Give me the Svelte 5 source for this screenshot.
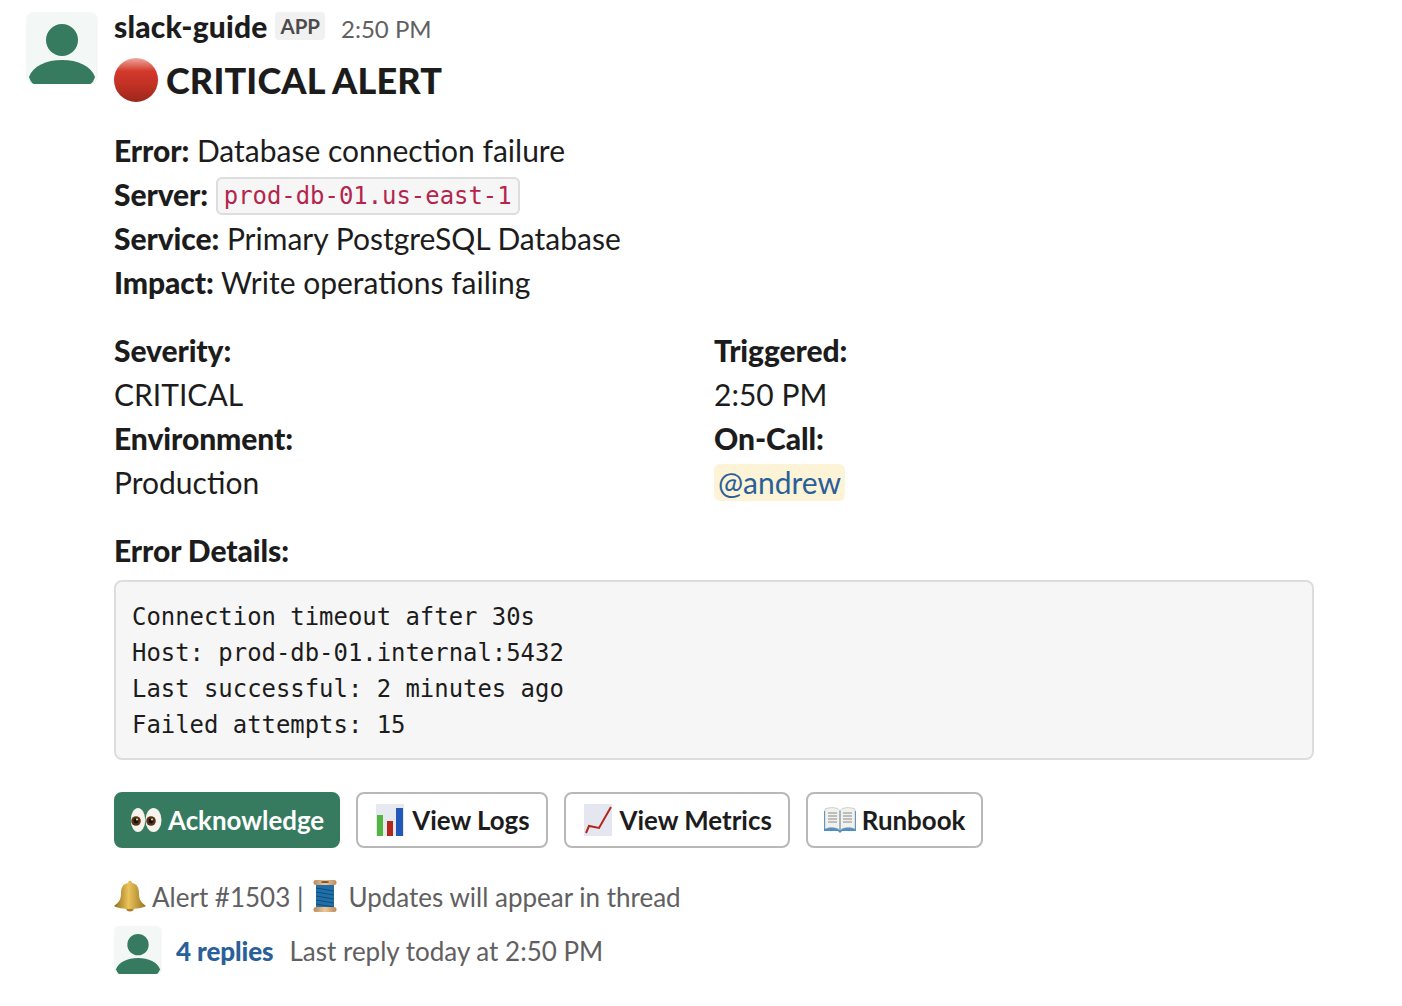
<script>
  const infoRows = [
    { label: 'Error:', value: 'Database connection failure' },
    { label: 'Server:', code: 'prod-db-01.us-east-1' },
    { label: 'Service:', value: 'Primary PostgreSQL Database' },
    { label: 'Impact:', value: 'Write operations failing' }
  ];
  const errorLines = [
    'Connection timeout after 30s',
    'Host: prod-db-01.internal:5432',
    'Last successful: 2 minutes ago',
    'Failed attempts: 15'
  ];
</script>

{#snippet avatar(cls)}
  <svg class={cls} viewBox="0 0 72 72" role="img" aria-label="avatar">
    <rect width="72" height="72" rx="8" fill="#f3f7f6" />
    <circle cx="36" cy="28" r="16" fill="#367b5f" />
    <path d="M3 65C7 54 20 48 36 48C52 48 65 54 69 65C68 68 66 72 64 72H8C6 72 4 68 3 65Z" fill="#367b5f" />
  </svg>
{/snippet}

<main class="message">
  {@render avatar('avatar')}
  <div class="body">
    <header class="meta">
      <span class="name">slack-guide</span>
      <span class="app">APP</span>
      <span class="time">2:50 PM</span>
    </header>

    <h1 class="title">
      <svg class="red-dot" viewBox="0 0 44 44">
        <defs>
          <linearGradient id="dot-fill" x1="0" y1="0" x2="0" y2="1">
            <stop offset="0" stop-color="#f0a79d" />
            <stop offset="0.3" stop-color="#d2392b" />
            <stop offset="0.65" stop-color="#bf3024" />
            <stop offset="1" stop-color="#9c261b" />
          </linearGradient>
        </defs>
        <circle cx="22" cy="22" r="22" fill="url(#dot-fill)" />
      </svg>
      <span>CRITICAL ALERT</span>
    </h1>

    <div class="info">
      {#each infoRows as row}
        <div class="line">
          <b>{row.label}</b>
          {#if row.code}<code>{row.code}</code>{:else}{row.value}{/if}
        </div>
      {/each}
    </div>

    <div class="fields">
      <div class="line"><b>Severity:</b></div>
      <div class="line"><b>Triggered:</b></div>
      <div class="line">CRITICAL</div>
      <div class="line">2:50 PM</div>
      <div class="line"><b>Environment:</b></div>
      <div class="line"><b>On-Call:</b></div>
      <div class="line">Production</div>
      <div class="line"><span class="mention">@andrew</span></div>
    </div>

    <div class="line details"><b>Error Details:</b></div>
    <pre class="block">{errorLines.join('\n')}</pre>

    <div class="actions">
      <button class="btn primary">
        <svg class="emoji" viewBox="0 0 32 32">
          <ellipse cx="8" cy="16" rx="7.200" ry="12" fill="#f6f3ec" />
          <ellipse cx="23.500" cy="16" rx="8" ry="12" fill="#f6f3ec" />
          <circle cx="6" cy="17" r="4.800" fill="#5a3411" />
          <circle cx="21" cy="17" r="4.800" fill="#5a3411" />
          <circle cx="6" cy="17" r="2.400" fill="#111" />
          <circle cx="21" cy="17" r="2.400" fill="#111" />
          <circle cx="7" cy="15.500" r="0.900" fill="#fff" />
          <circle cx="22" cy="15.500" r="0.900" fill="#fff" />
        </svg>
        Acknowledge
      </button>
      <button class="btn">
        <svg class="emoji" viewBox="0 0 32 32">
          <rect x="2" width="28" height="32" fill="#e6e9f0" />
          <rect x="3" y="11" width="6" height="21" fill="#53b63e" />
          <rect x="13" y="17" width="6" height="15" fill="#b3261a" />
          <rect x="22" y="4" width="7" height="28" fill="#2259b8" />
        </svg>
        View Logs
      </button>
      <button class="btn">
        <svg class="emoji" viewBox="0 0 32 32">
          <rect x="2" width="28" height="32" fill="#e4e7ef" />
          <path d="M4 29L7 22L17 24L29 3" fill="none" stroke="#b3261a" stroke-width="2" />
        </svg>
        View Metrics
      </button>
      <button class="btn">
        <svg class="emoji" viewBox="0 0 32 32">
          <path d="M0 7H32V27H18L16 29L14 27H0Z" fill="#4f8fc4" />
          <path d="M1 5C6 3 12 3 15.500 6V26C12 23 6 23 1 25Z" fill="#f1f1ee" stroke="#aaa" stroke-width="0.5" />
          <path d="M31 5C26 3 20 3 16.500 6V26C20 23 26 23 31 25Z" fill="#f1f1ee" stroke="#aaa" stroke-width="0.5" />
          <path d="M4 9H13M4 12H13M4 15H13M4 18H13M19 9H28M19 12H28M19 15H28M19 18H28" stroke="#8a8a8a" stroke-width="1" />
        </svg>
        Runbook
      </button>
    </div>

    <div class="context">
      <svg class="ctx-emoji" viewBox="0 0 32 32">
        <defs>
          <linearGradient id="bell-fill" x1="0" y1="0" x2="1" y2="0">
            <stop offset="0" stop-color="#8f6a17" />
            <stop offset="0.45" stop-color="#eac35a" />
            <stop offset="1" stop-color="#9a7420" />
          </linearGradient>
          <linearGradient id="spool-wood" x1="0" y1="0" x2="1" y2="0">
            <stop offset="0" stop-color="#b98a5c" />
            <stop offset="0.5" stop-color="#ecc79a" />
            <stop offset="1" stop-color="#b98a5c" />
          </linearGradient>
        </defs>
        <circle cx="16" cy="27.500" r="4" fill="#a97f26" />
        <path d="M14 3C14 0 18 0 18 3C24 4 25 9 25 14C25 20 28 23 32 26C26 30 6 30 0 26C4 23 7 20 7 14C7 9 8 4 14 3Z" fill="url(#bell-fill)" />
      </svg>
      <span class="ctx-text">Alert #1503 |</span>
      <svg class="ctx-emoji spool" viewBox="0 0 24 32">
        <rect x="3" y="4" width="18" height="24" fill="#1f6fa8" />
        <path d="M3 8L21 11M3 12L21 15M3 16L21 19M3 20L21 23M3 24L21 27" stroke="#124c78" stroke-width="1" />
        <rect x="0.500" y="0" width="23" height="5" rx="2.500" fill="url(#spool-wood)" />
        <ellipse cx="12" cy="2" rx="4" ry="1" fill="#7a5330" />
        <rect x="0.500" y="27" width="23" height="5" rx="2.500" fill="url(#spool-wood)" />
      </svg>
      <span class="ctx-text">Updates will appear in thread</span>
    </div>

    <div class="thread">
      {@render avatar('thread-avatar')}
      <span class="replies">4 replies</span>
      <span class="last-reply">Last reply today at 2:50 PM</span>
    </div>
  </div>
</main>

<style>
  :global(body) {
    margin: 0;
    background: #fff;
  }
  .message {
    display: flex;
    gap: 16px;
    padding: 12px 88px 0 26px;
    font-family: Lato, "Noto Sans", sans-serif;
    font-size: 30px;
    line-height: 44px;
    color: #1d1c1d;
  }
  .avatar {
    width: 72px;
    height: 72px;
    flex-shrink: 0;
  }
  .body {
    flex: 1;
    min-width: 0;
  }
  .meta {
    display: flex;
    align-items: center;
    height: 34px;
  }
  .name {
    margin-bottom: 6px;
    font-weight: 900;
    font-size: 30px;
    letter-spacing: 0.15px;
  }
  .app {
    margin-left: 8px;
    margin-top: -6px;
    padding: 0 5px;
    height: 28px;
    border-radius: 4px;
    background: #f1f1f1;
    color: #4c4b4c;
    font-size: 20.500px;
    line-height: 28px;
    font-weight: 700;
  }
  .time {
    margin-left: 16px;
    color: #616061;
    font-size: 24px;
  }
  .title {
    display: flex;
    align-items: center;
    gap: 8px;
    margin: 5px 0 0;
    font-size: 36px;
    line-height: 58px;
    font-weight: 900;
    letter-spacing: 0.15px;
  }
  .red-dot {
    width: 44px;
    height: 44px;
  }
  .info {
    margin-top: 19px;
  }
  .line {
    height: 44px;
    white-space: nowrap;
  }
  b {
    font-weight: 900;
    letter-spacing: -0.08px;
  }
  code {
    padding: 3px 6px;
    border: 2px solid #ddd;
    border-radius: 6px;
    background: #f6f6f6;
    color: #b4254c;
    font-family: "DejaVu Sans Mono", monospace;
    font-size: 23.920px;
    vertical-align: 2px;
  }
  .fields {
    display: grid;
    grid-template-columns: 600px 1fr;
    margin-top: 24px;
  }
  .mention {
    display: inline-block;
    padding: 0 4px;
    height: 37px;
    line-height: 36px;
    border-radius: 6px;
    background: #fdf3d7;
    color: #2a6099;
  }
  .details {
    margin-top: 24px;
  }
  .block {
    margin: 8px 0 0;
    padding: 17px 16px 15px;
    border: 2px solid #ddd;
    border-radius: 8px;
    background: #f6f6f6;
    font-family: "DejaVu Sans Mono", monospace;
    font-size: 23.920px;
    line-height: 36px;
    color: #1d1c1d;
  }
  .actions {
    display: flex;
    gap: 16px;
    margin-top: 32px;
  }
  .btn {
    display: flex;
    align-items: center;
    justify-content: center;
    gap: 6px;
    height: 56px;
    padding: 0 16px;
    border: 2px solid #b8b8b8;
    border-radius: 8px;
    background: #fff;
    color: #1d1c1d;
    font-family: inherit;
    font-size: 25.900px;
    font-weight: 700;
  }
  .primary {
    padding: 0 14px;
    border-color: #367b5f;
    background: #367b5f;
    color: #fff;
  }
  .emoji {
    width: 32px;
    height: 32px;
  }
  .context {
    display: flex;
    align-items: center;
    gap: 6px;
    margin-top: 26px;
    height: 44px;
    color: #616061;
    font-size: 26px;
  }
  .ctx-emoji {
    width: 32px;
    height: 32px;
  }
  .ctx-text {
    padding-top: 2px;
  }
  .spool {
    width: 24px;
    margin: 0 5px 0 4px;
  }
  .thread {
    display: flex;
    align-items: center;
    margin-top: 8px;
    height: 48px;
    font-size: 26px;
  }
  .thread-avatar {
    width: 48px;
    height: 48px;
    margin-right: 14px;
  }
  .replies {
    padding-top: 2px;
    color: #2a6099;
    font-weight: 900;
    letter-spacing: -0.1px;
    margin-right: 16px;
  }
  .last-reply {
    padding-top: 2px;
    color: #616061;
  }
</style>
